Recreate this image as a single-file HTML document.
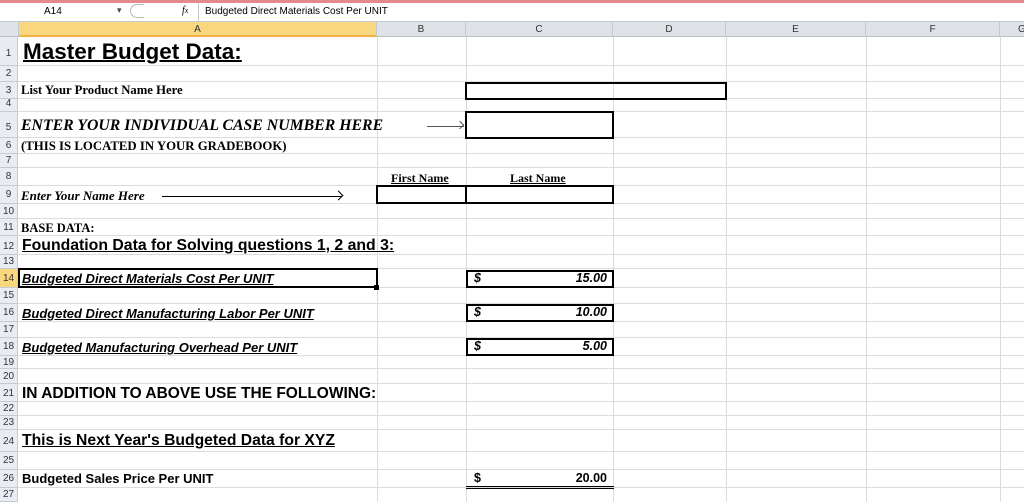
<!DOCTYPE html>
<html><head><style>
html,body{margin:0;width:1024px;height:502px;overflow:hidden}
body{background:#fff;position:relative;font-family:"Liberation Sans",sans-serif}
div{position:absolute;box-sizing:border-box}
.h{left:0;width:1024px;height:1px;background:#dadcdd}
.v{top:37px;height:465px;width:1px;background:#dadcdd}
.rn{left:0;width:18px;font-size:10px;color:#333;text-align:center;background:#e9edf3;border-right:1px solid #c5cbd3;border-bottom:1px solid #c5cbd3}
.ch{top:22px;height:15px;font-size:10px;color:#333;text-align:center;line-height:15px;background:#dfe3e8;border-right:1px solid #c5cbd3;border-bottom:1px solid #b9c0c8}
.t{white-space:nowrap;color:#000}
.ser{font-family:"Liberation Serif",serif;font-weight:bold}
.box{border:2px solid #000}
</style></head><body>
<div style="left:0;top:0;width:1024px;height:3px;background:#e58a8a"></div>
<div style="left:0;top:3px;width:1024px;height:19px;background:#fff;border-bottom:1px solid #c5cbd3"></div>
<div class="t" style="left:44px;top:6px;font-size:10px">A14</div>
<div class="t" style="left:117px;top:5px;font-size:9px;color:#444">▾</div>
<div style="left:130px;top:4px;width:14px;height:14px;border:1px solid #bbb;border-radius:7px 0 0 7px;border-right:none"></div>
<div class="t" style="left:182px;top:5px;font-size:10px;font-style:italic;font-family:'Liberation Serif',serif">f<span style="font-size:8px">x</span></div>
<div style="left:198px;top:3px;width:1px;height:19px;background:#c5cbd3"></div>
<div class="t" style="left:205px;top:6px;font-size:10px">Budgeted Direct Materials Cost Per UNIT</div>
<div class="ch" style="left:0;width:19px"></div>
<div class="ch" style="left:19px;width:358px;background:#f9d77e;border-bottom:2px solid #f2b543">A</div>
<div class="ch" style="left:377px;width:89px">B</div>
<div class="ch" style="left:466px;width:147px">C</div>
<div class="ch" style="left:613px;width:113px">D</div>
<div class="ch" style="left:726px;width:140px">E</div>
<div class="ch" style="left:866px;width:134px">F</div>
<div class="ch" style="left:1000px;width:30px;text-align:left;padding-left:18px">G</div>
<div class="v" style="left:377px"></div>
<div class="v" style="left:466px"></div>
<div class="v" style="left:613px"></div>
<div class="v" style="left:726px"></div>
<div class="v" style="left:866px"></div>
<div class="v" style="left:1000px"></div>
<div class="h" style="top:65px"></div><div class="h" style="top:81px"></div><div class="h" style="top:98px"></div>
<div class="h" style="top:111px"></div><div class="h" style="top:137px"></div><div class="h" style="top:153px"></div>
<div class="h" style="top:167px"></div><div class="h" style="top:185px"></div><div class="h" style="top:203px"></div>
<div class="h" style="top:218px"></div><div class="h" style="top:235px"></div><div class="h" style="top:254px"></div>
<div class="h" style="top:268px"></div><div class="h" style="top:287px"></div><div class="h" style="top:303px"></div>
<div class="h" style="top:321px"></div><div class="h" style="top:337px"></div><div class="h" style="top:355px"></div>
<div class="h" style="top:368px"></div><div class="h" style="top:383px"></div><div class="h" style="top:401px"></div>
<div class="h" style="top:415px"></div><div class="h" style="top:429px"></div><div class="h" style="top:451px"></div>
<div class="h" style="top:469px"></div><div class="h" style="top:487px"></div>
<div class="rn" style="top:37px;height:29px;line-height:34px">1</div>
<div class="rn" style="top:66px;height:16px;line-height:16px">2</div>
<div class="rn" style="top:82px;height:17px;line-height:17px">3</div>
<div class="rn" style="top:99px;height:13px;line-height:10px">4</div>
<div class="rn" style="top:112px;height:26px;line-height:32px">5</div>
<div class="rn" style="top:138px;height:16px;line-height:16px">6</div>
<div class="rn" style="top:154px;height:14px;line-height:14px">7</div>
<div class="rn" style="top:168px;height:18px;line-height:18px">8</div>
<div class="rn" style="top:186px;height:18px;line-height:18px">9</div>
<div class="rn" style="top:204px;height:15px;line-height:15px">10</div>
<div class="rn" style="top:219px;height:17px;line-height:17px">11</div>
<div class="rn" style="top:236px;height:19px;line-height:21px">12</div>
<div class="rn" style="top:255px;height:14px;line-height:14px">13</div>
<div class="rn" style="top:269px;height:19px;line-height:19px;background:#f9d77e">14</div>
<div class="rn" style="top:288px;height:16px;line-height:16px">15</div>
<div class="rn" style="top:304px;height:18px;line-height:18px">16</div>
<div class="rn" style="top:322px;height:16px;line-height:16px">17</div>
<div class="rn" style="top:338px;height:18px;line-height:18px">18</div>
<div class="rn" style="top:356px;height:13px;line-height:13px">19</div>
<div class="rn" style="top:369px;height:15px;line-height:15px">20</div>
<div class="rn" style="top:384px;height:18px;line-height:20px">21</div>
<div class="rn" style="top:402px;height:14px;line-height:14px">22</div>
<div class="rn" style="top:416px;height:14px;line-height:14px">23</div>
<div class="rn" style="top:430px;height:22px;line-height:24px">24</div>
<div class="rn" style="top:452px;height:18px;line-height:18px">25</div>
<div class="rn" style="top:470px;height:18px;line-height:18px">26</div>
<div class="rn" style="top:488px;height:14px;line-height:14px">27</div>
<div class="t" style="left:23px;top:39px;font-size:22.5px;font-weight:bold;text-decoration:underline;text-decoration-thickness:2px">Master Budget Data:</div>
<div class="t ser" style="left:21px;top:83px;font-size:12.7px">List Your Product Name Here</div>
<div class="box" style="left:465px;top:82px;width:262px;height:18px"></div>
<div class="t ser" style="left:21px;top:117px;font-size:15.8px;font-style:italic">ENTER YOUR INDIVIDUAL CASE NUMBER HERE</div>
<div style="left:427px;top:126px;width:37px;height:1px;background:#555"></div>
<div style="left:457px;top:122px;width:6px;height:6px;border-top:1px solid #555;border-right:1px solid #555;transform:rotate(45deg)"></div>
<div class="box" style="left:465px;top:111px;width:149px;height:28px"></div>
<div class="t ser" style="left:21px;top:139px;font-size:12.8px">(THIS IS LOCATED IN YOUR GRADEBOOK)</div>
<div class="t ser" style="left:391px;top:171px;font-size:12px;text-decoration:underline">First Name</div>
<div class="t ser" style="left:510px;top:171px;font-size:12px;text-decoration:underline">Last Name</div>
<div class="t ser" style="left:21px;top:188px;font-size:13px;font-style:italic">Enter Your Name Here</div>
<div style="left:162px;top:196px;width:180px;height:1px;background:#000"></div>
<div style="left:335px;top:192px;width:7px;height:7px;border-top:1px solid #000;border-right:1px solid #000;transform:rotate(45deg)"></div>
<div class="box" style="left:376px;top:185px;width:91px;height:19px"></div>
<div class="box" style="left:465px;top:185px;width:149px;height:19px"></div>
<div class="t ser" style="left:21px;top:221px;font-size:12.5px">BASE DATA:</div>
<div class="t" style="left:22px;top:237px;font-size:15.8px;font-weight:bold;text-decoration:underline">Foundation Data for Solving questions 1, 2 and 3:</div>
<div class="box" style="left:18px;top:268px;width:360px;height:20px"></div>
<div style="left:374px;top:285px;width:5px;height:5px;background:#000"></div>
<div class="t" style="left:22px;top:271px;font-size:13px;font-weight:bold;font-style:italic;text-decoration:underline">Budgeted Direct Materials Cost Per UNIT</div>
<div class="t" style="left:22px;top:306px;font-size:13px;font-weight:bold;font-style:italic;text-decoration:underline">Budgeted Direct Manufacturing Labor Per UNIT</div>
<div class="t" style="left:22px;top:340px;font-size:13px;font-weight:bold;font-style:italic;text-decoration:underline">Budgeted Manufacturing Overhead Per UNIT</div>
<div class="box" style="left:466px;top:270px;width:148px;height:18px"></div>
<div class="box" style="left:466px;top:304px;width:148px;height:18px"></div>
<div class="box" style="left:466px;top:338px;width:148px;height:18px"></div>
<div class="t" style="left:474px;top:271px;font-size:12.5px;font-weight:bold;font-style:italic">$</div>
<div class="t" style="left:474px;top:305px;font-size:12.5px;font-weight:bold;font-style:italic">$</div>
<div class="t" style="left:474px;top:339px;font-size:12.5px;font-weight:bold;font-style:italic">$</div>
<div class="t" style="left:520px;width:87px;text-align:right;top:271px;font-size:12.5px;font-weight:bold;font-style:italic">15.00</div>
<div class="t" style="left:520px;width:87px;text-align:right;top:305px;font-size:12.5px;font-weight:bold;font-style:italic">10.00</div>
<div class="t" style="left:520px;width:87px;text-align:right;top:339px;font-size:12.5px;font-weight:bold;font-style:italic">5.00</div>
<div class="t" style="left:22px;top:385px;font-size:15.5px;font-weight:bold">IN ADDITION TO ABOVE USE THE FOLLOWING:</div>
<div class="t" style="left:22px;top:432px;font-size:15.7px;font-weight:bold;text-decoration:underline">This is Next Year's Budgeted Data for XYZ</div>
<div class="t" style="left:22px;top:471px;font-size:13px;font-weight:bold">Budgeted Sales Price Per UNIT</div>
<div class="t" style="left:474px;top:471px;font-size:12.5px;font-weight:bold">$</div>
<div class="t" style="left:520px;width:87px;text-align:right;top:471px;font-size:12.5px;font-weight:bold">20.00</div>
<div style="left:466px;top:486px;width:148px;height:1px;background:#000"></div>
<div style="left:466px;top:488px;width:148px;height:1px;background:#000"></div>
</body></html>
